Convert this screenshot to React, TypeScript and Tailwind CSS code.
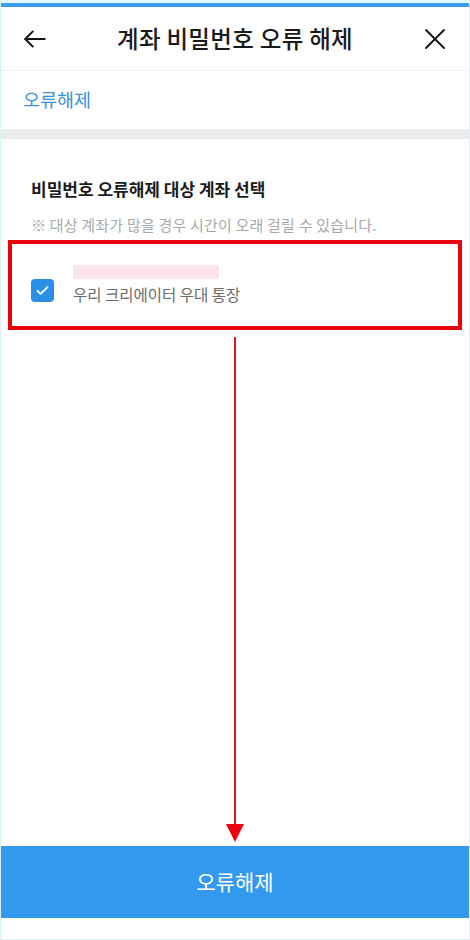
import React, { useState } from "react";

export default function App() {
  const [checked, setChecked] = useState(true);

  return (
    <div
      className="w-[470px] h-[940px] flex flex-col bg-white border-x border-[#d9f2f0] overflow-hidden"
      style={{ fontFamily: '"Noto Sans CJK KR", "Noto Sans", sans-serif' }}
    >
      {/* top */}
      <div className="h-[3px] bg-[#e4f6f5]" />
      <div className="h-[4px] bg-[#3a9be8]" />

      {/* header */}
      <div className="h-[64px] flex items-center justify-between px-[21px] border-b border-[#f1f1f1]">
        <button className="w-[26px] h-[26px] flex items-center justify-center">
          <svg width="26" height="26" viewBox="0 0 24 24" fill="none" stroke="#111" strokeWidth="1.8" strokeLinecap="round" strokeLinejoin="round">
            <path d="M21 12H3" />
            <path d="M10 5l-7 7 7 7" />
          </svg>
        </button>
        <h1 className="text-[23.5px] font-medium text-[#1a1a1a] tracking-[0.3px]">계좌 비밀번호 오류 해제</h1>
        <button className="w-[26px] h-[26px] flex items-center justify-center">
          <svg width="24" height="24" viewBox="0 0 24 24" fill="none" stroke="#111" strokeWidth="1.8" strokeLinecap="round">
            <path d="M3 3l18 18" />
            <path d="M21 3L3 21" />
          </svg>
        </button>
      </div>

      {/* tab */}
      <div className="h-[58px] flex items-center pl-[22px]">
        <span className="text-[18.5px] text-[#3a93dc]">오류해제</span>
      </div>
      <div className="h-[10px] bg-[#ebeded]" />

      {/* content */}
      <div className="pt-[38px]">
        <h2 className="px-[30px] text-[17px] leading-[24px] font-bold text-[#1b1b1b]">비밀번호 오류해제 대상 계좌 선택</h2>
        <p className="mt-[13px] px-[30px] text-[15px] leading-[22px] text-[#a8a8a8] tracking-[0.2px]">※ 대상 계좌가 많을 경우 시간이 오래 걸릴 수 있습니다.</p>

        <div className="mt-[4px] mx-[7px] h-[90px] border-[4px] border-[#e8000b] flex items-center pl-[19px]">
          <button
            onClick={() => setChecked(!checked)}
            className={`w-[23px] h-[23px] rounded-[4px] flex items-center justify-center mt-[11px] ${checked ? "bg-[#2a8fe8]" : "bg-white border border-gray-300"}`}
          >
            {checked && (
              <svg width="15" height="15" viewBox="0 0 24 24" fill="none" stroke="#fff" strokeWidth="3" strokeLinecap="round" strokeLinejoin="round">
                <path d="M4 12.5l5 5L20 6.5" />
              </svg>
            )}
          </button>
          <div className="ml-[19px] flex flex-col">
            <div className="w-[146px] h-[14px] bg-[#fce4ec]" />
            <span className="mt-[5px] text-[15.5px] leading-[21px] text-[#6b6b6b]">우리 크리에이터 우대 통장</span>
          </div>
        </div>
      </div>

      {/* annotation arrow */}
      <div className="flex-1 flex flex-col items-center pt-[7px] pb-[4px]">
        <div className="w-[2px] flex-1 bg-[#e0141e]" />
        <svg width="18" height="18" viewBox="0 0 18 18" className="-mt-[2px]">
          <polygon points="0,0 18,0 9,18" fill="#ee0010" />
        </svg>
      </div>

      {/* bottom button */}
      <button className="h-[72px] w-full bg-[#3399ef] text-white text-[21px]">오류해제</button>
      <div className="h-[22px] bg-white border-b border-[#d9f2f0]" />
    </div>
  );
}
